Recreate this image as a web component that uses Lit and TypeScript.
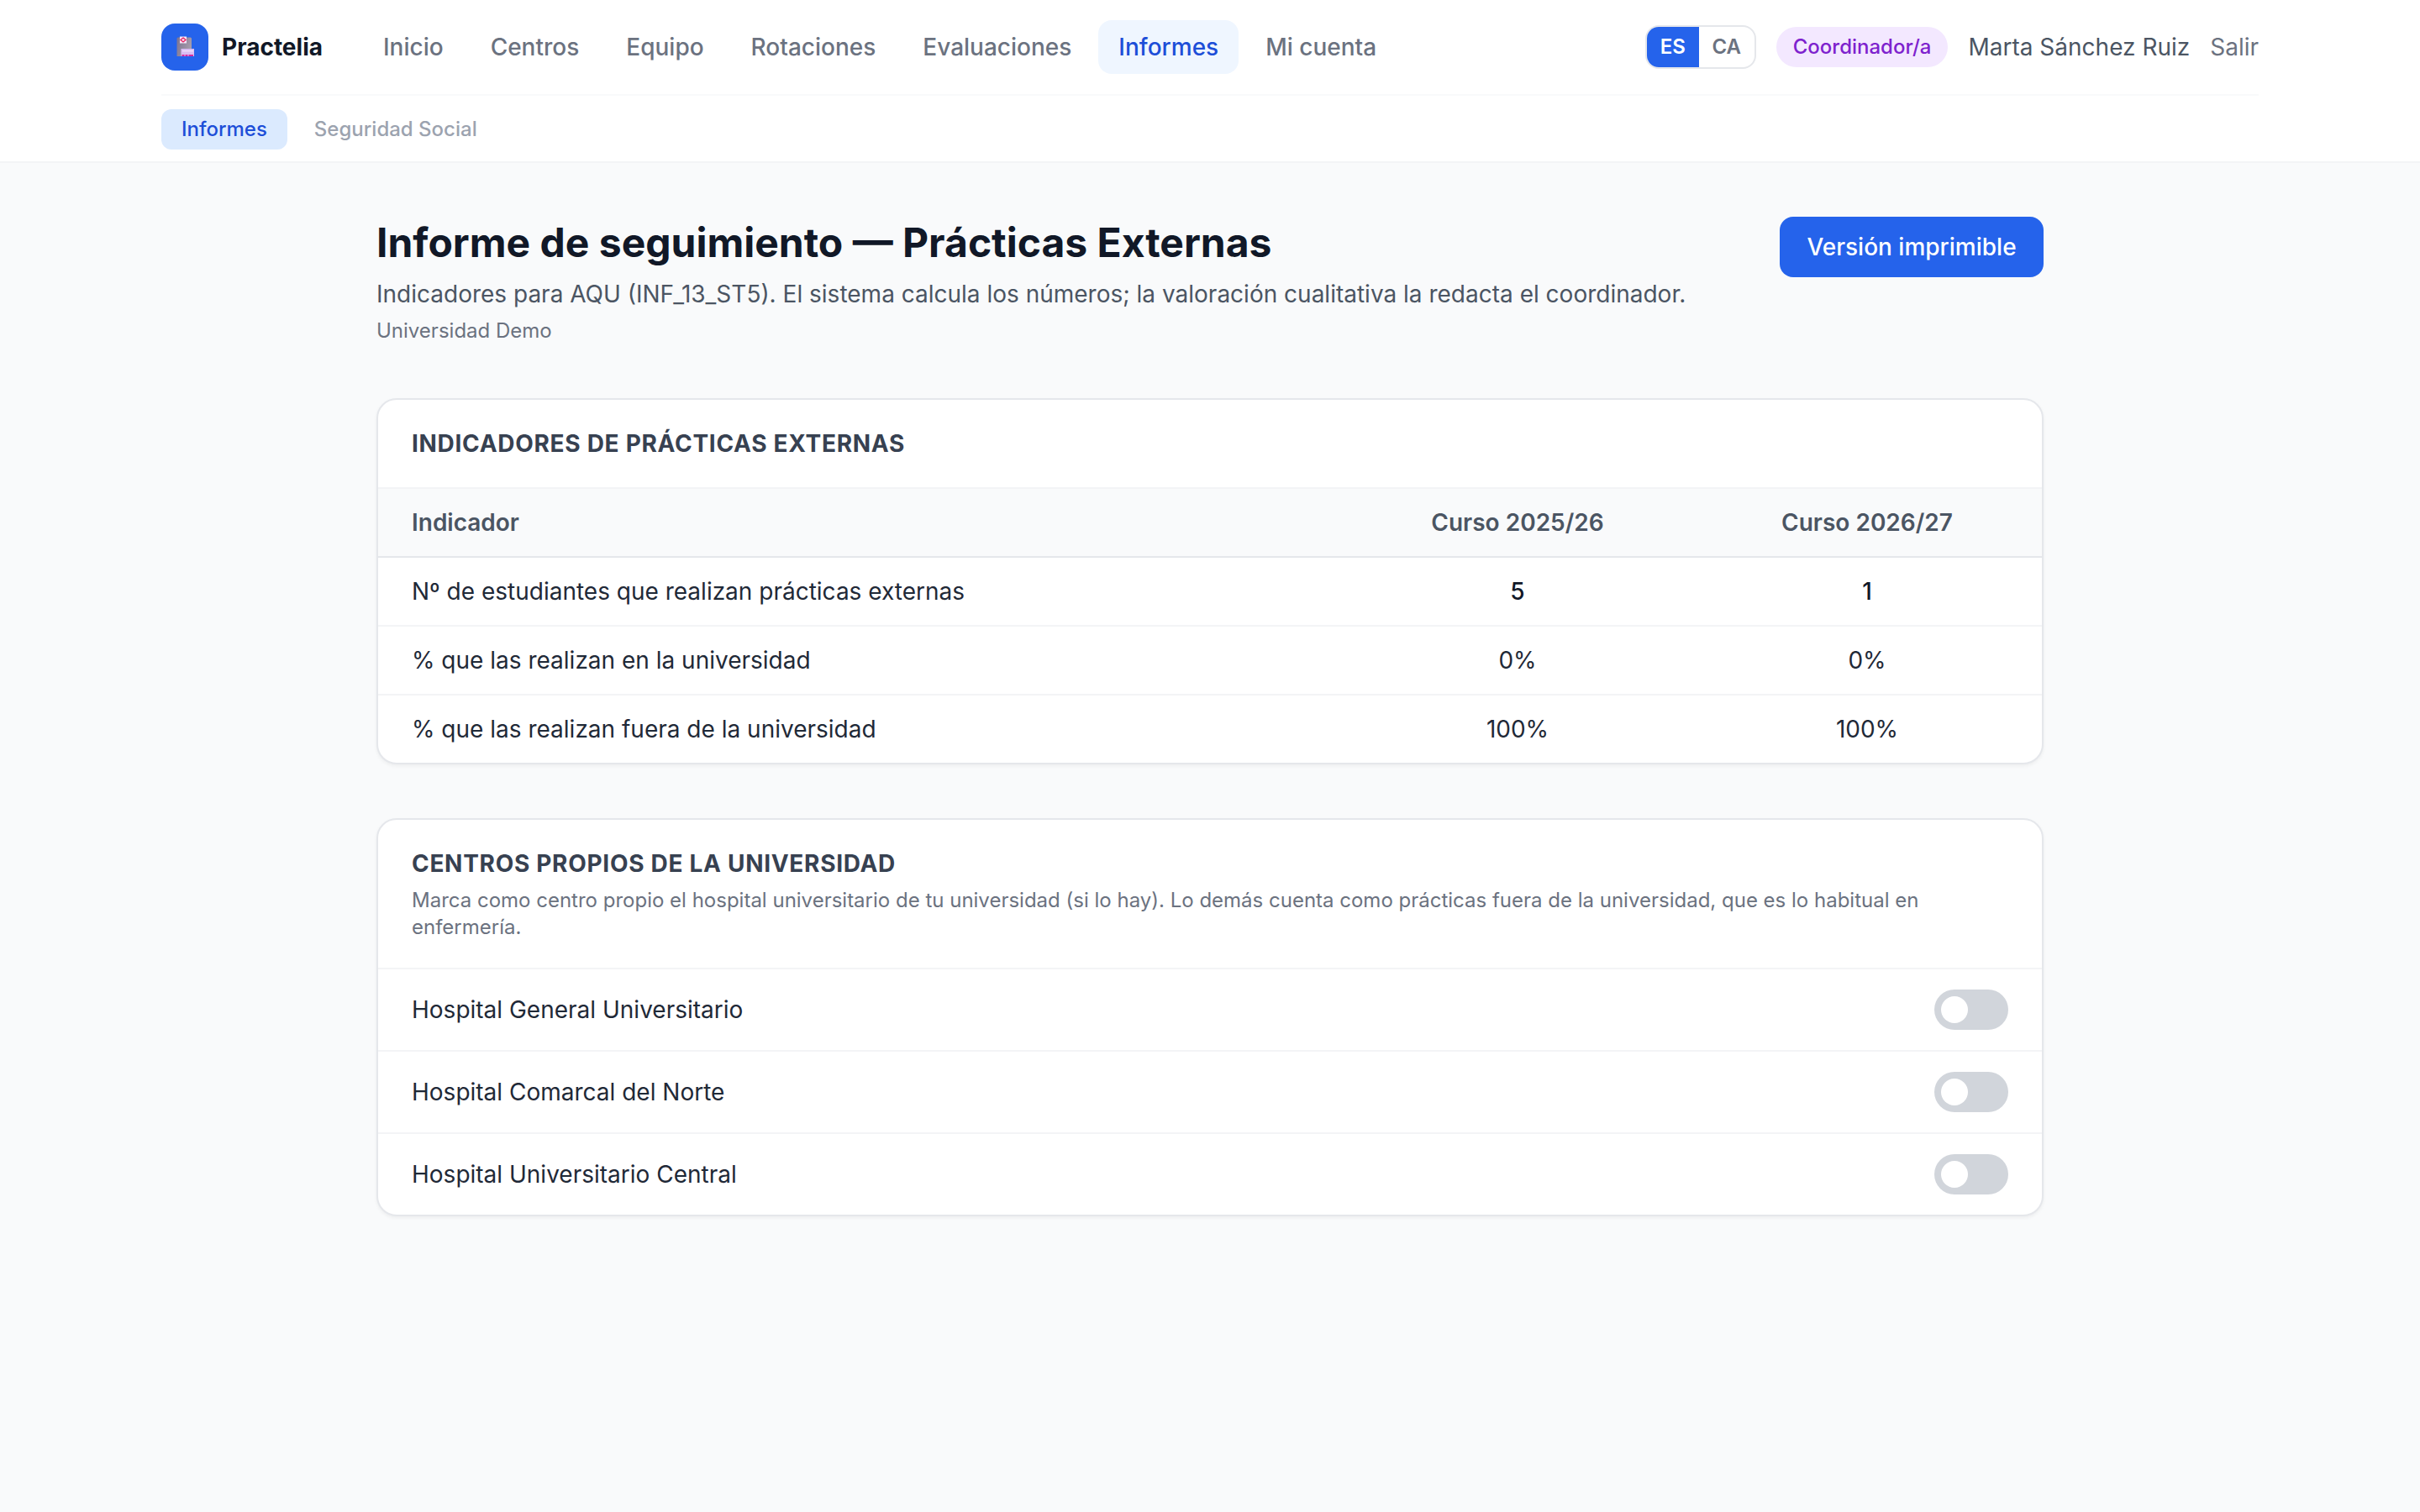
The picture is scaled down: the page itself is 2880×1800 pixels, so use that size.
import { LitElement, html, css } from 'lit';
import { customElement, property, state } from 'lit/decorators.js';
import { classMap } from 'lit/directives/class-map.js';

interface Indicator {
  label: string;
  values: string[];
  total?: boolean;
}

interface Center {
  name: string;
  own: boolean;
}

const NAV = ['Inicio', 'Centros', 'Equipo', 'Rotaciones', 'Evaluaciones', 'Informes', 'Mi cuenta'];
const SUBNAV = ['Informes', 'Seguridad Social'];
const LANGS = ['ES', 'CA'];
const COURSES = ['Curso 2025/26', 'Curso 2026/27'];

const INDICATORS: Indicator[] = [
  { label: 'Nº de estudiantes que realizan prácticas externas', values: ['5', '1'], total: true },
  { label: '% que las realizan en la universidad', values: ['0%', '0%'] },
  { label: '% que las realizan fuera de la universidad', values: ['100%', '100%'] },
];

// ---- <toggle-switch> ----

@customElement('toggle-switch')
export class ToggleSwitch extends LitElement {
  @property({ type: Boolean, reflect: true }) on = false;

  static styles = css`
    :host {
      display: block;
      flex: none;
    }

    .track {
      display: flex;
      align-items: center;
      box-sizing: border-box;
      width: 88px;
      height: 48px;
      padding: 8px;
      border: 0;
      border-radius: 24px;
      background: #d1d5db;
      cursor: pointer;
    }

    .knob {
      width: 32px;
      height: 32px;
      border-radius: 50%;
      background: #fff;
    }

    :host([on]) .track {
      justify-content: flex-end;
      background: #2563eb;
    }
  `;

  render() {
    return html`
      <button class="track" role="switch" aria-checked=${this.on ? 'true' : 'false'}>
        <span class="knob"></span>
      </button>
    `;
  }
}

// ---- <app-header> ----

@customElement('app-header')
export class AppHeader extends LitElement {
  @state() private lang = 'ES';

  static styles = css`
    :host {
      display: block;
      background: #fff;
      border-bottom: 2px solid #f3f4f6;
    }

    .inner {
      width: 2496px;
      margin: 0 auto;
    }

    .bar {
      display: flex;
      align-items: center;
      justify-content: space-between;
      height: 112px;
    }

    .left {
      display: flex;
      align-items: center;
      gap: 48px;
    }

    .brand {
      display: flex;
      align-items: center;
      gap: 16px;
      font-weight: 700;
      color: #111827;
    }

    .logo {
      display: flex;
      align-items: center;
      justify-content: center;
      width: 56px;
      height: 56px;
      border-radius: 16px;
      background: #2563eb;
    }

    .logo svg {
      display: block;
      width: 24px;
      height: 28px;
    }

    .nav,
    .subnav {
      display: flex;
      gap: 8px;
    }

    .link {
      padding: 12px 24px;
      border-radius: 16px;
      font-weight: 500;
      color: #6b7280;
    }

    .link.current {
      background: #eff6ff;
      color: #1d4ed8;
    }

    .right {
      display: flex;
      align-items: center;
      gap: 24px;
    }

    .langs {
      display: grid;
      grid-template-columns: 62px 66px;
      overflow: hidden;
      border: 2px solid #e5e7eb;
      border-radius: 16px;
      font-size: 24px;
      line-height: 32px;
      font-weight: 600;
      text-align: center;
    }

    .lang {
      padding: 8px 0;
      color: #6b7280;
      cursor: pointer;
    }

    .lang.current {
      background: #2563eb;
      color: #fff;
    }

    .role {
      padding: 8px 20px;
      border-radius: 24px;
      background: #f3e8ff;
      font-size: 24px;
      line-height: 32px;
      font-weight: 500;
      color: #7e22ce;
    }

    .user {
      color: #4b5563;
    }

    .logout {
      color: #6b7280;
    }

    .subnav {
      padding: 16px 0 14px;
      border-top: 2px solid #f9fafb;
      font-size: 24px;
      line-height: 32px;
    }

    .sublink {
      padding: 8px 24px;
      border-radius: 12px;
      font-weight: 500;
      color: #9ca3af;
    }

    .sublink.current {
      background: #dbeafe;
      color: #1d4ed8;
    }
  `;

  render() {
    return html`
      <div class="inner">
        <div class="bar">
          <div class="left">
            <div class="brand">
              <span class="logo">${this._renderLogo()}</span>
              <span>Practelia</span>
            </div>
            <nav class="nav">
              ${NAV.map((n) => html`
                <a class=${classMap({ link: true, current: n === 'Informes' })}>${n}</a>
              `)}
            </nav>
          </div>
          <div class="right">
            <div class="langs">
              ${LANGS.map((l) => html`
                <span
                  class=${classMap({ lang: true, current: l === this.lang })}
                  @click=${() => { this.lang = l; }}
                >${l}</span>
              `)}
            </div>
            <span class="role">Coordinador/a</span>
            <span class="user">Marta Sánchez Ruiz</span>
            <a class="logout">Salir</a>
          </div>
        </div>
        <nav class="subnav">
          ${SUBNAV.map((n, i) => html`
            <a class=${classMap({ sublink: true, current: i === 0 })}>${n}</a>
          `)}
        </nav>
      </div>
    `;
  }

  // Small hospital: grey tower, red cross sign, low wing with an entrance
  private _renderLogo() {
    return html`
      <svg viewBox="0 0 24 28" aria-hidden="true">
        <defs>
          <linearGradient id="tower" x1="0" x2="1" y1="0" y2="0.4">
            <stop offset="0" stop-color="#7d7390"></stop>
            <stop offset="1" stop-color="#a79dac"></stop>
          </linearGradient>
        </defs>
        <path d="M2.500 4q0-1.500 1.500-1.500H18.500q1.500 0 1.500 1.500V25H2.500z" fill="url(#tower)"></path>
        <rect x="6" y="1.500" width="8" height="8" fill="#f6e3f6"></rect>
        <path d="M10 3L13 5.500 10 8 7 5.500z" fill="none" stroke="#e8215f" stroke-width="1.300"></path>
        <rect x="7.500" y="16" width="15.500" height="9" fill="#d9bdf3"></rect>
        <rect x="9" y="18" width="13" height="1.300" fill="#f0e2fc"></rect>
        <path d="M8.500 23h3v2h-3zM12.500 23h3v2h-3zM16.500 23h5.500v2h-5.500z" fill="#d32ba0"></path>
      </svg>
    `;
  }
}

// ---- <app-root> ----

@customElement('app-root')
export class AppRoot extends LitElement {
  @state() private centers: Center[] = [
    { name: 'Hospital General Universitario', own: false },
    { name: 'Hospital Comarcal del Norte', own: false },
    { name: 'Hospital Universitario Central', own: false },
  ];

  static styles = css`
    :host {
      display: block;
      min-height: 100vh;
      background: #f9fafb;
      font-family: Inter, "Liberation Sans", sans-serif;
      font-size: 28px;
      line-height: 40px;
      color: #111827;
    }

    .main {
      display: flex;
      flex-direction: column;
      gap: 64px;
      width: 1984px;
      margin: 0 auto;
      padding: 64px 0;
    }

    .heading {
      display: flex;
      align-items: flex-start;
      justify-content: space-between;
    }

    .title {
      margin: 0;
      font-size: 48px;
      line-height: 62px;
      font-weight: 700;
    }

    .lead {
      margin: 10px 0 0;
      color: #4b5563;
    }

    .org {
      margin: 8px 0 0;
      font-size: 24px;
      line-height: 32px;
      color: #6b7280;
    }

    .print {
      width: 314px;
      padding: 16px 0;
      border: 0;
      border-radius: 16px;
      background: #2563eb;
      font: inherit;
      font-weight: 500;
      color: #fff;
      cursor: pointer;
    }

    .card {
      overflow: hidden;
      border: 2px solid #e5e7eb;
      border-radius: 24px;
      background: #fff;
      box-shadow: 0 2px 4px rgba(0, 0, 0, 0.05);
    }

    .card-head {
      padding: 32px 40px;
      border-bottom: 2px solid #f3f4f6;
    }

    .card-title {
      margin: 0;
      font-size: 28px;
      line-height: 40px;
      font-weight: 700;
      letter-spacing: 0.025em;
      text-transform: uppercase;
      color: #374151;
    }

    .card-note {
      margin: 8px 0 0;
      font-size: 24px;
      line-height: 32px;
      color: #6b7280;
    }

    .row {
      display: grid;
      grid-template-columns: 1fr 416px 416px;
      border-bottom: 2px solid #f3f4f6;
      color: #1f2937;
    }

    .row.head {
      background: #f9fafb;
      border-bottom-color: #e5e7eb;
      font-weight: 600;
      color: #4b5563;
    }

    .row:last-child,
    .center:last-child {
      border-bottom: 0;
    }

    .cell {
      padding: 20px 40px;
      text-align: center;
    }

    .cell:first-child {
      text-align: left;
    }

    .row.total .cell:not(:first-child) {
      font-weight: 500;
      color: #111827;
    }

    .center {
      display: flex;
      align-items: center;
      justify-content: space-between;
      padding: 24px 40px;
      border-bottom: 2px solid #f3f4f6;
      color: #1f2937;
    }
  `;

  render() {
    return html`
      <app-header></app-header>
      <main class="main">
        <div class="heading">
          <div>
            <h1 class="title">Informe de seguimiento — Prácticas Externas</h1>
            <p class="lead">Indicadores para AQU (INF_13_ST5). El sistema calcula los números; la valoración cualitativa la redacta el coordinador.</p>
            <p class="org">Universidad Demo</p>
          </div>
          <button class="print">Versión imprimible</button>
        </div>
        ${this._renderIndicators()}
        ${this._renderCenters()}
      </main>
    `;
  }

  private _renderIndicators() {
    return html`
      <section class="card">
        <div class="card-head">
          <h2 class="card-title">Indicadores de prácticas externas</h2>
        </div>
        <div class="row head">
          <div class="cell">Indicador</div>
          ${COURSES.map((c) => html`<div class="cell">${c}</div>`)}
        </div>
        ${INDICATORS.map((ind) => html`
          <div class=${classMap({ row: true, total: !!ind.total })}>
            <div class="cell">${ind.label}</div>
            ${ind.values.map((v) => html`<div class="cell">${v}</div>`)}
          </div>
        `)}
      </section>
    `;
  }

  private _renderCenters() {
    return html`
      <section class="card">
        <div class="card-head">
          <h2 class="card-title">Centros propios de la universidad</h2>
          <p class="card-note">Marca como centro propio el hospital universitario de tu universidad (si lo hay). Lo demás cuenta como prácticas fuera de la universidad, que es lo habitual en enfermería.</p>
        </div>
        ${this.centers.map((c, i) => html`
          <div class="center">
            <span>${c.name}</span>
            <toggle-switch ?on=${c.own} @click=${() => this._toggle(i)}></toggle-switch>
          </div>
        `)}
      </section>
    `;
  }

  private _toggle(index: number) {
    this.centers = this.centers.map((c, i) => (i === index ? { ...c, own: !c.own } : c));
  }
}
